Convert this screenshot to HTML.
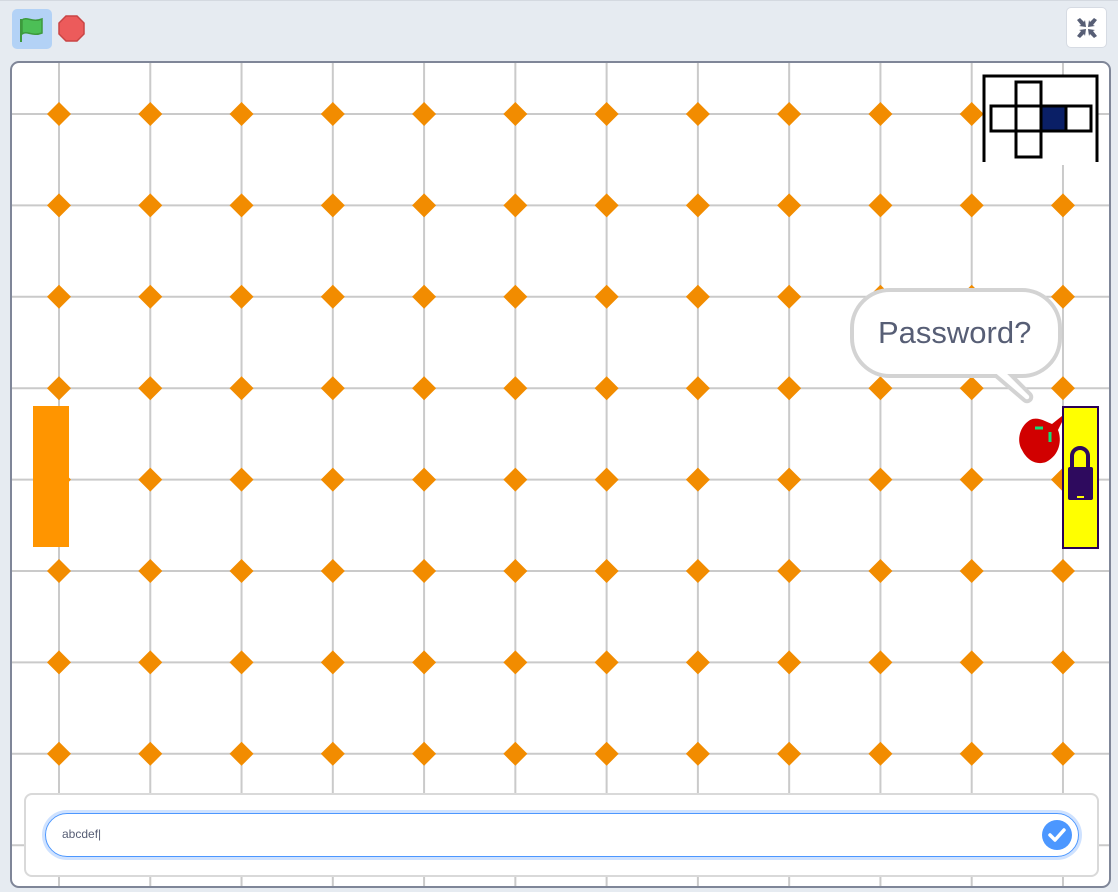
<!DOCTYPE html>
<html><head><style>
body{margin:0;width:1118px;height:892px;background:#e6ebf1;font-family:"Liberation Sans",sans-serif;position:relative;overflow:hidden}
.top{position:absolute;left:0;top:0;width:1118px;height:1px;background:#d4d9e0}
.flag{position:absolute;left:12px;top:9px;width:40px;height:40px;border-radius:5px;background:#b3d2f6}
.fs{position:absolute;left:1066px;top:7px;width:41px;height:41px;border-radius:5px;background:#fff;border:1px solid #d6dbe3;box-sizing:border-box}
.stage{position:absolute;left:10px;top:61px;width:1101px;height:827px;box-sizing:border-box;border:2px solid #7f8698;border-radius:9px;overflow:hidden;background:#fff}
.ask{position:absolute;left:12px;top:730px;width:1075px;height:84px;box-sizing:border-box;border:2px solid #d9d9d9;border-radius:8px;background:#fff}
.inp{position:absolute;left:19px;top:18px;width:1034px;height:44px;box-sizing:border-box;border:1px solid #4c97ff;border-radius:22px;box-shadow:0 0 0 3px #cfe2ff;font-size:12px;color:#575e75;padding:13px 0 0 16px}
</style></head><body>
<div class="top"></div>
<div class="flag"><svg width="40" height="40"><path d="M9 10 V33" stroke="#3d9a3d" stroke-width="2"/><path d="M10 11 C15 7 20 14 30 10 V24 C20 28 15 21 10 25Z" fill="#4cbf56" stroke="#3d9a3d" stroke-width="1.5"/></svg></div>
<svg style="position:absolute;left:58px;top:15px" width="27" height="27"><polygon points="8,1 19,1 26,8 26,19 19,26 8,26 1,19 1,8" fill="#ec5b5b" stroke="#c94545" stroke-width="1.5"/></svg>
<div class="fs"><svg width="40" height="40" viewBox="0 0 40 40" fill="#575e75"><path d="M10 12l3-2 4 4 1-2 1 7-7-1 2-1z"/><path d="M30 12l-3-2-4 4-1-2-1 7 7-1-2-1z"/><path d="M10 28l3 2 4-4 1 2 1-7-7 1 2 1z"/><path d="M30 28l-3 2-4-4-1 2-1-7 7 1-2 1z"/></svg></div>
<div class="stage">
<svg id="g" width="1101" height="827" style="position:absolute;left:-2px;top:-2px"></svg>
<div class="ask"><div class="inp">abcdef|</div>
<svg style="position:absolute;left:1015px;top:24px" width="32" height="32"><circle cx="16" cy="16" r="15" fill="#4c97ff"/><path d="M9 16l5 5 9-10" stroke="#fff" stroke-width="3.5" fill="none" stroke-linecap="round" stroke-linejoin="round"/></svg></div>
</div>
<script>
var s='',ox=10,oy=61;
for(var i=0;i<12;i++){var x=59+i*91.27-ox;s+='<line x1="'+x+'" y1="0" x2="'+x+'" y2="827" stroke="#cacaca" stroke-width="2"/>';}
for(var j=0;j<9;j++){var y=114+j*91.4-oy;s+='<line x1="0" y1="'+y+'" x2="1101" y2="'+y+'" stroke="#cacaca" stroke-width="2"/>';}
for(var i=0;i<12;i++)for(var j=0;j<8;j++){var x=59+i*91.27-ox,y=114+j*91.4-oy;s+='<polygon points="'+x+','+(y-12)+' '+(x+12)+','+y+' '+x+','+(y+12)+' '+(x-12)+','+y+'" fill="#f28c00"/>';}
s+='<rect x="'+(33-ox)+'" y="'+(406-oy)+'" width="36" height="141" fill="#ff9500"/>';
var m='<g transform="translate('+(-ox)+','+(-oy)+')" fill="none" stroke="#000" stroke-width="3">';
m+='<rect x="983" y="75" width="115" height="90" fill="#fff" stroke="none"/>';
m+='<path d="M984 162V76H1097V162"/>';
m+='<rect x="1016" y="82" width="25" height="24" fill="#fff"/><rect x="991" y="106" width="25" height="25" fill="#fff"/><rect x="1016" y="106" width="25" height="25" fill="#fff"/><rect x="1041" y="106" width="25" height="25" fill="#0a1f66"/><rect x="1066" y="106" width="25" height="25" fill="#fff"/><rect x="1016" y="131" width="25" height="26" fill="#fff"/>';
m+='<path d="M890 290H1022A38 38 0 0 1 1060 328V338A38 38 0 0 1 1022 376H1012L1030 394A4 4 0 0 1 1024 400L996 376H890A38 38 0 0 1 852 338V328A38 38 0 0 1 890 290Z" fill="#fff" stroke="#d3d3d3" stroke-width="4"/>';
m+='</g>';
m+='<text x="'+(878-ox)+'" y="'+(343-oy)+'" font-family="Liberation Sans" font-size="31" fill="#575e75">Password?</text>';
m+='<g transform="translate('+(-ox)+','+(-oy)+')"><path d="M1030 420C1038 416 1046 422 1052 424L1062 416L1064 418L1058 430C1062 440 1060 455 1046 462C1038 465 1028 462 1022 450C1016 440 1020 426 1030 420Z" fill="#d10000"/><path d="M1035 428h8M1050 432v10" stroke="#11e07a" stroke-width="3"/>';
m+='<rect x="1063" y="407" width="35" height="141" fill="#ffff00" stroke="#2a0055" stroke-width="2"/><rect x="1068" y="467" width="25" height="33" rx="2" fill="#2e0a5e"/><path d="M1072 468V456A8 8 0 0 1 1088 456V468" fill="none" stroke="#2e0a5e" stroke-width="4"/><rect x="1077" y="496" width="7" height="2" fill="#ffff00"/></g>';
document.getElementById('g').innerHTML=s+m;
</script>
</body></html>
